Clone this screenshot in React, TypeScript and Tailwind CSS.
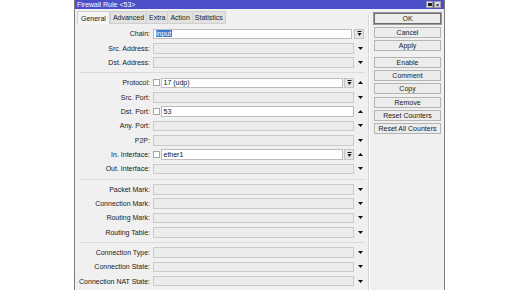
import React from 'react';

type Arrow = 'up' | 'down' | null;

interface FieldRowProps {
  label: string;
  white?: boolean;
  check?: boolean;
  value?: string;
  selected?: boolean;
  btn?: boolean;
  arrow?: Arrow;
  chain?: boolean;
}

const ComboIcon = () => (
  <svg width="5" height="6" viewBox="0 0 5 6">
    <rect x="0.5" y="0" width="4" height="1" fill="#111" />
    <path d="M0.5 2h4L2.5 5z" fill="#111" />
  </svg>
);

const ArrowIcon = ({ dir }: { dir: 'up' | 'down' }) => (
  <svg width="5" height="3" viewBox="0 0 5 3">
    {dir === 'down' ? <path d="M0 0h5L2.5 3z" fill="#111" /> : <path d="M0 3h5L2.5 0z" fill="#111" />}
  </svg>
);

const FieldRow: React.FC<FieldRowProps> = ({ label, white, check, value, selected, btn, arrow = 'down', chain }) => {
  return (
    <div className="flex items-center h-[14.33px]">
      <div className="w-[75px] text-right text-[#1a1a1a] whitespace-nowrap leading-none">{label}</div>
      <div className="ml-[3px] w-[212px] flex items-center">
        {check && <div className="w-[7px] h-[7px] bg-white border border-[#a6a6a6] mr-[1px] shrink-0" />}
        <div
          className={`flex-1 h-[10.5px] flex items-center pl-[1.5px] border ${
            white ? 'bg-white border-[#bdbdbd]' : 'bg-[#ececec] border-[#cacaca]'
          }`}
        >
          {value &&
            (selected ? (
              <span className="bg-[#3b78d8] text-white leading-none px-[0.5px]">{value}</span>
            ) : (
              <span className="text-[#111] leading-none">{value}</span>
            ))}
        </div>
        {btn && (
          <div
            className={`${chain ? 'ml-[2px]' : 'ml-[1px]'} w-[10px] h-[10.5px] bg-[#e4e4e4] border border-[#c4c4c4] flex items-center justify-center shrink-0`}
          >
            <ComboIcon />
          </div>
        )}
        {chain ? (
          <div className="w-[1px]" />
        ) : (
          <div className="ml-[1px] w-[10px] flex items-center justify-center shrink-0">
            {arrow && <ArrowIcon dir={arrow} />}
          </div>
        )}
      </div>
    </div>
  );
};

const Sep = () => (
  <div className="h-[6px] flex items-center">
    <div className="ml-[5px] mr-[3px] flex-1 h-px bg-[#dadada]" />
  </div>
);

const tabs = ['General', 'Advanced', 'Extra', 'Action', 'Statistics'];
const buttons = ['OK', 'Cancel', 'Apply', 'Enable', 'Comment', 'Copy', 'Remove', 'Reset Counters', 'Reset All Counters'];

export default function App() {
  return (
    <div className="w-[516px] h-[290px] bg-white flex overflow-hidden font-['Liberation_Sans',Arial,sans-serif] text-[7px]">
      <div className="w-[74px] shrink-0" />
      <div className="w-[371px] shrink-0 flex flex-col border-l border-r border-[#7b7b7b] bg-[#f0f0f0]">
        {/* title bar */}
        <div className="h-[9px] bg-[#4c4fc7] flex items-center pl-[2px] pr-[3px]">
          <span className="text-white leading-none flex-1">Firewall Rule &lt;53&gt;</span>
          <div className="flex gap-[1px]">
            <div className="w-[7px] h-[7px] bg-[#dcdce6] border border-[#9a9ab0] flex items-center justify-center">
              <div className="w-[4px] h-[3px] border border-[#222] border-t-2" />
            </div>
            <div className="w-[7px] h-[7px] bg-[#dcdce6] border border-[#9a9ab0] flex items-center justify-center text-[#111] text-[6px] font-bold leading-none">
              ×
            </div>
          </div>
        </div>

        <div className="flex flex-1">
          {/* left: tabs + form */}
          <div className="w-[293px] flex flex-col">
            <div className="mt-[2px] h-[13px] flex pl-[2px] items-stretch">
              {tabs.map((t, i) => (
                <div
                  key={t}
                  className={`px-[2px] flex items-center leading-none text-[#1a1a1a] border ${
                    i === 0
                      ? 'bg-[#f4f4f4] border-[#d0d0d0] border-b-0 mr-[1px] px-[3px]'
                      : 'bg-[#e2e2e2] border-[#cfcfcf] -ml-px'
                  }`}
                >
                  {t}
                </div>
              ))}
            </div>
            <div className="pt-[2.83px] flex flex-col">
              <FieldRow label="Chain:" white value="input" selected btn chain />
              <FieldRow label="Src. Address:" />
              <FieldRow label="Dst. Address:" />
              <Sep />
              <FieldRow label="Protocol:" check white value="17 (udp)" btn arrow="up" />
              <FieldRow label="Src. Port:" />
              <FieldRow label="Dst. Port:" check white value="53" arrow="up" />
              <FieldRow label="Any. Port:" />
              <FieldRow label="P2P:" />
              <FieldRow label="In. Interface:" check white value="ether1" btn arrow="up" />
              <FieldRow label="Out. Interface:" />
              <Sep />
              <FieldRow label="Packet Mark:" />
              <FieldRow label="Connection Mark:" />
              <FieldRow label="Routing Mark:" />
              <FieldRow label="Routing Table:" />
              <Sep />
              <FieldRow label="Connection Type:" />
              <FieldRow label="Connection State:" />
              <FieldRow label="Connection NAT State:" />
            </div>
          </div>

          {/* separator */}
          <div className="w-px mt-[5px] bg-[#d6d6d6] border-r border-white box-content" />

          {/* buttons */}
          <div className="ml-[4px] w-[67px] pt-[4.3px] flex flex-col gap-[2.33px]">
            {buttons.map((b, i) => (
              <div
                key={b}
                className={`h-[11px] flex items-center justify-center leading-none text-[#1a1a1a] bg-[#ececec] border whitespace-nowrap ${
                  i === 0 ? 'border-[#6e6e6e] outline outline-1 outline-[#9a9a9a]' : 'border-[#b4b4b4]'
                } ${i === 3 ? 'mt-[3.4px]' : ''}`}
              >
                {b}
              </div>
            ))}
          </div>
        </div>
      </div>
    </div>
  );
}
